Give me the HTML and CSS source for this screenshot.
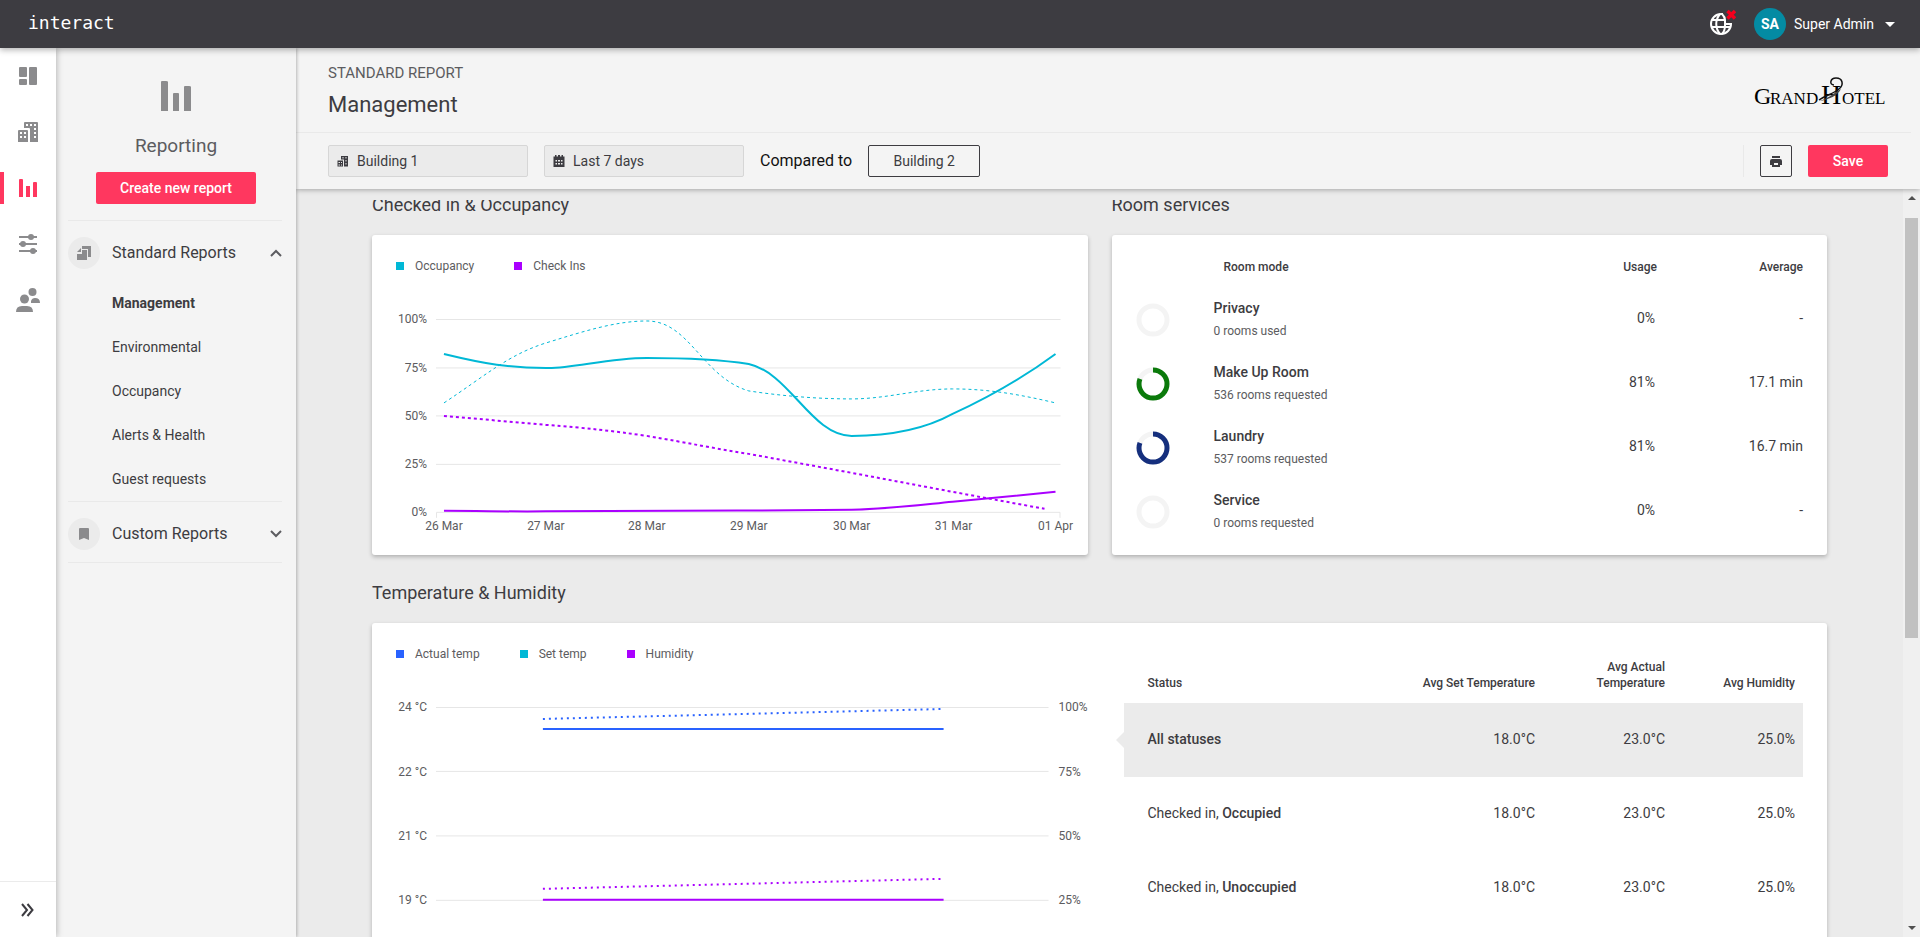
FILE: index.html
```html
<!DOCTYPE html>
<html lang="en">
<head>
  <meta charset="UTF-8">
  <title>Interact - Management report</title>
  <meta name="viewport" content="width=device-width, initial-scale=1">
  <link rel="stylesheet" href="styles.css">
</head>
<body>

<header class="topbar">
  <a class="brand" href="#">interact</a>
  <div class="topbar-right">
    <button class="icon-button globe" aria-label="Connection status">
      <svg width="28" height="28" viewBox="0 0 28 28">
        <g fill="none" stroke="#fff" stroke-width="2">
          <path d="M15 5h-2a10 10 0 1 0 10 10h-6"/>
          <path d="M12 5c-5 6-5 14 0 20M14 5c2 2 3 4 3 6v5c0 4-1 7-3 9M4 11h13M4 18h18"/>
        </g>
        <path d="M19.500 2l7.500 7.500M27 2l-7.500 7.500" stroke="#f5001d" stroke-width="3.500"/>
      </svg>
    </button>
    <button class="user">
      <span class="avatar">SA</span>
      <span>Super Admin</span>
      <svg width="10" height="5" viewBox="0 0 10 5"><path d="M0 0h10L5 5z" fill="#fff"/></svg>
    </button>
  </div>
</header>

<div class="shell">
  <nav class="rail" aria-label="Main">
    <a href="#" class="rail-item" aria-label="Dashboard">
      <svg width="24" height="24" viewBox="0 0 24 24" fill="currentColor"><rect x="3" y="3" width="8" height="10" rx="1"/><rect x="3" y="15" width="8" height="6" rx="1"/><rect x="13" y="3" width="8" height="18" rx="1"/></svg>
    </a>
    <a href="#" class="rail-item" aria-label="Buildings">
      <svg width="24" height="24" viewBox="0 0 24 24" fill="currentColor" fill-rule="evenodd"><path d="M9 2h12q1 0 1 1v19h-8V9q0-1-1-1H8V3q0-1 1-1zM10 4v2h2V4zm4 0v2h2V4zm4 0v2h2V4zm0 4v2h2V8zm0 4v2h2v-2zm0 4v2h2v-2zM3 10h8q1 0 1 1v11H2V11q0-1 1-1zm1 2v2h2v-2zm4 0v2h2v-2zm-4 4v2h2v-2zm4 0v2h2v-2z"/></svg>
    </a>
    <a href="#" class="rail-item active" aria-label="Reporting">
      <svg width="24" height="24" viewBox="0 0 24 24" fill="currentColor"><path d="M3 21V4q0-1 1-1h2q1 0 1 1v17zM10 21V10h4v11zM17 21V7q0-1 1-1h2q1 0 1 1v14z"/></svg>
    </a>
    <a href="#" class="rail-item" aria-label="Settings">
      <svg width="24" height="24" viewBox="0 0 24 24" fill="currentColor"><path d="M3 4h18v2H3zM3 11h18v2H3zM3 18h18v2H3z"/><circle cx="15" cy="5" r="3"/><circle cx="7" cy="12" r="3"/><circle cx="17" cy="19" r="3"/></svg>
    </a>
    <a href="#" class="rail-item" aria-label="Users">
      <svg width="24" height="24" viewBox="0 0 24 24" fill="currentColor"><circle cx="16.500" cy="4" r="4"/><circle cx="8.500" cy="11" r="4.500"/><path d="M0 24q0-6 6-6h5q6 0 6 6zM15 15V13q1-3 4-3 5 0 5 5z"/></svg>
    </a>
    <button class="rail-expand" aria-label="Expand menu">
      <svg width="14" height="14" viewBox="0 0 14 14" fill="none" stroke="#3d3c41" stroke-width="2"><path d="M1 1l5 6-5 6M6.500 1l5 6-5 6"/></svg>
    </button>
  </nav>

  <aside class="sidebar">
    <div class="sidebar-head">
      <svg width="32" height="32" viewBox="0 0 32 32" fill="#8b8b8d"><path d="M1 31V2q0-1 1-1h4q2 0 2 1v29zM13 31V14q0-1 1-1h4q1 0 1 1v17zM24 31V7q0-1 1-1h4q2 0 2 1v24z"/></svg>
      <h2>Reporting</h2>
      <button class="btn-primary create">Create new report</button>
    </div>
    <div class="menu-group">
      <button class="menu-toggle" aria-expanded="true">
        <span class="menu-icon">
          <svg width="16" height="16" viewBox="0 0 16 16" fill="#8b8b8d"><path d="M6 1h9v11h-3V4H6zM6 5h5v10H1V9h5zM1 7l4-4v4z"/></svg>
        </span>
        <span class="menu-label">Standard Reports</span>
        <svg width="12" height="8" viewBox="0 0 12 8" fill="none" stroke="#5c5c60" stroke-width="2"><path d="M1 7l5-5 5 5"/></svg>
      </button>
      <ul class="menu-list">
        <li><a class="selected" href="#">Management</a></li>
        <li><a href="#">Environmental</a></li>
        <li><a href="#">Occupancy</a></li>
        <li><a href="#">Alerts &amp; Health</a></li>
        <li><a href="#">Guest requests</a></li>
      </ul>
    </div>
    <div class="menu-group last">
      <button class="menu-toggle" aria-expanded="false">
        <span class="menu-icon">
          <svg width="16" height="16" viewBox="0 0 16 16" fill="#8b8b8d"><path d="M3 14V3q0-1 1-1h8q1 0 1 1v11l-5-2z"/></svg>
        </span>
        <span class="menu-label">Custom Reports</span>
        <svg width="12" height="8" viewBox="0 0 12 8" fill="none" stroke="#5c5c60" stroke-width="2"><path d="M1 1l5 5 5-5"/></svg>
      </button>
    </div>
  </aside>

  <main class="main">
    <div class="page-head">
      <div class="page-title">
        <div>
          <p class="eyebrow">STANDARD REPORT</p>
          <h1>Management</h1>
        </div>
        <svg class="hotel-logo" width="134" height="30" viewBox="0 0 134 30" role="img" aria-label="Grand Hotel">
          <text y="28"><tspan x="0" class="cap">G</tspan><tspan x="16">RAND</tspan><tspan x="67" class="big">H</tspan><tspan x="88">OTEL</tspan></text>
          <path d="M80 9c-5 0-4-7 2-7 7 0 8 7 3 11-6 5-13 6-20 11" fill="none" stroke="#111" stroke-width="1.500"/>
          <path d="M65 25c7-1 15-8 22-12-3 6-12 11-22 12z" fill="#444"/>
        </svg>
      </div>
      <div class="filters">
        <button class="field">
          <svg width="12" height="12" viewBox="0 0 24 24" fill="#3d3c41" fill-rule="evenodd"><path d="M8 2h14v21h-8V9H8zM11 4v3h2V4zm6 0v3h2V4zm0 6v3h2v-3zm0 6v3h2v-3zM1 11h11v12H1zm2 3v2h3v-2zm5 0v2h2v-2zm-5 5v2h3v-2zm5 0v2h2v-2z"/></svg>
          Building 1
        </button>
        <button class="field">
          <svg width="12" height="12" viewBox="0 0 24 24" fill="#3d3c41" fill-rule="evenodd"><path d="M1 3h3V0h3v3h3V0h4v3h3V0h3v3h3v21H1zM5 10v3h3v-3zm5 0v3h4v-3zm6 0v3h3v-3zM5 16v3h3v-3zm5 0v3h4v-3zm6 0v3h3v-3z"/></svg>
          Last 7 days
        </button>
        <span class="compared">Compared to</span>
        <button class="btn-outline">Building 2</button>
        <div class="actions">
          <button class="btn-outline print" aria-label="Print">
            <svg width="12" height="12" viewBox="0 0 12 12" fill="#3d3c41"><path d="M2 1h8v2H2zM2 4h8q2 0 2 2v4H0V6q0-2 2-2zM2 8h8v4H2z"/><path d="M4 8h4v2H4z" fill="#f4f4f4"/></svg>
          </button>
          <button class="btn-primary save">Save</button>
        </div>
      </div>
    </div>

    <div class="scroll-area">
      <div class="viewport">
        <div class="content">
          <section>
            <h3>Checked in &amp; Occupancy</h3>
            <div class="card">
              <ul class="legend">
                <li class="cyan">Occupancy</li>
                <li class="purple">Check Ins</li>
              </ul>
              <svg class="chart" viewBox="0 0 716 270">
                <path class="grid" d="M64 34.500h625M64 83h625M64 131h625M64 179.500h625M64.500 233v-5.500h624v5.500"/>
                <g class="axis-left">
                  <text x="55" y="38">100%</text>
                  <text x="55" y="87">75%</text>
                  <text x="55" y="135">50%</text>
                  <text x="55" y="183">25%</text>
                  <text x="55" y="231">0%</text>
                </g>
                <g class="axis-bottom">
                  <text x="72" y="245">26 Mar</text>
                  <text x="174" y="245">27 Mar</text>
                  <text x="275" y="245">28 Mar</text>
                  <text x="377" y="245">29 Mar</text>
                  <text x="480" y="245">30 Mar</text>
                  <text x="582" y="245">31 Mar</text>
                  <text x="684" y="245">01 Apr</text>
                </g>
                <path class="line cyan thin" d="M72 118C113 91 136 70 174 58C210 47 243 36 275 36C318 36 330 92 377 106C410 111 445 114 480 114C515 114 545 104 581 104C618 104 650 110 684 118"/>
                <path class="line purple dashed" d="M72 131L174 140C215 143 240 146 275 151C316 158 345 164 377 169L480 188L581 207L673 224"/>
                <path class="line cyan" d="M72 69C113 79 138 83 174 83C200 84 235 73 275 73C316 73 345 74 377 79C418 88 440 151 480 151C515 151 550 146 581 129C618 112 650 94 684 69"/>
                <path class="line purple" d="M72 226C113 226 138 227 174 226.500C240 226 380 226 480 225C520 224 550 220 581 217L684 207"/>
              </svg>
            </div>
          </section>

          <section>
            <h3>Room services</h3>
            <div class="card services">
              <table>
                <thead>
                  <tr><th class="ring-col"></th><th class="mode">Room mode</th><th class="usage">Usage</th><th class="average">Average</th></tr>
                </thead>
                <tbody>
                  <tr>
                    <td><svg class="ring" viewBox="0 0 34 34"><circle cx="17" cy="17" r="14"/></svg></td>
                    <td class="name"><strong>Privacy</strong><small>0 rooms used</small></td>
                    <td class="usage">0%</td><td class="average">-</td>
                  </tr>
                  <tr>
                    <td><svg class="ring" viewBox="0 0 34 34"><circle cx="17" cy="17" r="14"/><circle class="green" cx="17" cy="17" r="14" pathLength="100"/></svg></td>
                    <td class="name"><strong>Make Up Room</strong><small>536 rooms requested</small></td>
                    <td class="usage">81%</td><td class="average">17.1 min</td>
                  </tr>
                  <tr>
                    <td><svg class="ring" viewBox="0 0 34 34"><circle cx="17" cy="17" r="14"/><circle class="navy" cx="17" cy="17" r="14" pathLength="100"/></svg></td>
                    <td class="name"><strong>Laundry</strong><small>537 rooms requested</small></td>
                    <td class="usage">81%</td><td class="average">16.7 min</td>
                  </tr>
                  <tr>
                    <td><svg class="ring" viewBox="0 0 34 34"><circle cx="17" cy="17" r="14"/></svg></td>
                    <td class="name"><strong>Service</strong><small>0 rooms requested</small></td>
                    <td class="usage">0%</td><td class="average">-</td>
                  </tr>
                </tbody>
              </table>
            </div>
          </section>

          <section class="wide">
            <h3>Temperature &amp; Humidity</h3>
            <div class="card climate">
              <div>
                <ul class="legend">
                  <li class="blue">Actual temp</li>
                  <li class="cyan">Set temp</li>
                  <li class="purple">Humidity</li>
                </ul>
                <svg class="chart" viewBox="0 0 716 270">
                  <path class="grid" d="M64 34.500h613M64 98.500h613M64 163h613M64 227.500h613"/>
                  <g class="axis-left">
                    <text x="55" y="38">24 °C</text>
                    <text x="55" y="103">22 °C</text>
                    <text x="55" y="167">21 °C</text>
                    <text x="55" y="231">19 °C</text>
                  </g>
                  <g class="axis-right">
                    <text x="687" y="38">100%</text>
                    <text x="687" y="103">75%</text>
                    <text x="687" y="167">50%</text>
                    <text x="687" y="231">25%</text>
                  </g>
                  <path class="line blue" d="M171 56H572"/>
                  <path class="line blue dotted" d="M171 46L572 36"/>
                  <path class="line purple" d="M171 227H572"/>
                  <path class="line purple dotted" d="M171 216L572 206"/>
                </svg>
              </div>
              <div class="status">
                <table>
                  <thead>
                    <tr><th>Status</th><th>Avg Set Temperature</th><th class="narrow">Avg Actual Temperature</th><th class="narrow">Avg Humidity</th></tr>
                  </thead>
                  <tbody>
                    <tr class="current"><td><strong>All statuses</strong></td><td>18.0°C</td><td>23.0°C</td><td>25.0%</td></tr>
                    <tr><td>Checked in, <strong>Occupied</strong></td><td>18.0°C</td><td>23.0°C</td><td>25.0%</td></tr>
                    <tr><td>Checked in, <strong>Unoccupied</strong></td><td>18.0°C</td><td>23.0°C</td><td>25.0%</td></tr>
                  </tbody>
                </table>
              </div>
            </div>
          </section>
        </div>
      </div>
      <div class="scrollbar" aria-hidden="true">
        <svg width="8" height="4" viewBox="0 0 8 4"><path d="M0 4l4-4 4 4z" fill="#505050"/></svg>
        <div class="track"><div class="thumb"></div></div>
        <svg width="8" height="4" viewBox="0 0 8 4"><path d="M0 0l4 4 4-4z" fill="#505050"/></svg>
      </div>
    </div>
  </main>
</div>

</body>
</html>
```
FILE: styles.css
```css
* {
  box-sizing: border-box;
}
body {
  margin: 0;
  height: 100vh;
  display: flex;
  flex-direction: column;
  overflow: hidden;
  font-family: Roboto, "Liberation Sans", sans-serif;
  font-size: 14px;
  line-height: 20px;
  color: #3d3c41;
  background: #ebebeb;
}
h1, h2, h3, p, ul {
  margin: 0;
  padding: 0;
  font-weight: 400;
}
ul {
  list-style: none;
}
a {
  color: inherit;
  text-decoration: none;
}
button {
  font: inherit;
  color: inherit;
  background: none;
  border: 0;
  padding: 0;
  cursor: pointer;
}
svg {
  display: block;
  flex-shrink: 0;
}
table {
  width: 100%;
  border-collapse: collapse;
}
th {
  font-size: 12px;
  line-height: 16px;
  font-weight: 500;
}
td, th {
  padding: 0;
}
strong {
  font-weight: 500;
}

/* top bar */
.topbar {
  height: 48px;
  flex-shrink: 0;
  display: flex;
  align-items: center;
  justify-content: space-between;
  padding: 0 25px 0 28px;
  background: #3d3c41;
  color: #fff;
  position: relative;
  z-index: 3;
  box-shadow: 0 2px 6px rgba(0,0,0,0.3);
}
.brand {
  padding-bottom: 2px;
  font-family: "DejaVu Sans Mono", monospace;
  font-size: 18px;
}
.topbar-right {
  display: flex;
  align-items: center;
  gap: 18px;
}
.globe {
  padding-bottom: 2px;
}
.user {
  display: flex;
  align-items: center;
}
.avatar {
  width: 32px;
  height: 32px;
  line-height: 32px;
  margin-right: 8px;
  border-radius: 50%;
  background: #048ba3;
  font-weight: 700;
}
.user svg {
  margin-left: 11px;
}

/* left icon rail */
.shell {
  flex: 1;
  min-height: 0;
  display: flex;
}
.rail {
  width: 56px;
  flex-shrink: 0;
  display: flex;
  flex-direction: column;
  background: #fff;
  color: #8b8b8d;
  position: relative;
  z-index: 2;
  box-shadow: 1px 0 6px rgba(0,0,0,0.25);
}
.rail-item {
  height: 56px;
  display: flex;
  align-items: center;
  justify-content: center;
}
.rail-item.active {
  color: #ff375f;
  background: linear-gradient(#ff375f, #ff375f) left center / 4px 32px no-repeat;
}
.rail-expand {
  height: 56px;
  margin-top: auto;
  display: flex;
  align-items: center;
  justify-content: center;
  border-top: 1px solid #ebebeb;
}

/* section menu */
.sidebar {
  width: 240px;
  flex-shrink: 0;
  padding: 0 14px 0 12px;
  background: #f4f4f4;
  position: relative;
  z-index: 1;
  box-shadow: 1px 0 3px rgba(0,0,0,0.25);
}
.sidebar-head {
  display: flex;
  flex-direction: column;
  align-items: center;
  padding: 32px 0 16px 2px;
}
.sidebar-head h2 {
  margin: 22px 0 14px;
  font-size: 19px;
  line-height: 24px;
  color: #5c5c60;
}
.btn-primary {
  height: 32px;
  border-radius: 2px;
  background: #ff375f;
  color: #fff;
  font-weight: 500;
}
.create {
  width: 160px;
}
.menu-group {
  border-top: 1px solid #e9e9e9;
}
.menu-group.last {
  border-bottom: 1px solid #e9e9e9;
}
.menu-toggle {
  width: 100%;
  height: 56px;
  display: flex;
  align-items: center;
  gap: 12px;
  margin-top: 4px;
  font-size: 16px;
  text-align: left;
}
.menu-icon {
  width: 32px;
  height: 32px;
  display: flex;
  align-items: center;
  justify-content: center;
  border-radius: 50%;
  background: #ebebeb;
}
.menu-label {
  flex: 1;
}
.menu-list a {
  display: block;
  padding-left: 44px;
  line-height: 44px;
}
.menu-list .selected {
  font-weight: 700;
}

/* page header */
.main {
  flex: 1;
  min-width: 0;
  display: flex;
  flex-direction: column;
}
.page-head {
  background: #f4f4f4;
  position: relative;
  box-shadow: 0 1px 5px rgba(0,0,0,0.3);
}
.page-title {
  display: flex;
  justify-content: space-between;
  align-items: center;
  height: 85px;
  margin-right: 9px;
  padding: 2px 23px 0 32px;
  border-bottom: 1px solid #e9e9e9;
}
.eyebrow {
  margin-bottom: 8px;
  font-size: 15px;
  color: #5c5c60;
}
.page-title h1 {
  font-size: 22px;
  line-height: 28px;
}
.hotel-logo {
  overflow: visible;
  font-family: "Liberation Serif", serif;
  font-size: 17px;
}
.hotel-logo .cap {
  font-size: 24px;
}
.hotel-logo .big {
  font-size: 28px;
}
.filters {
  display: flex;
  align-items: center;
  gap: 16px;
  padding: 12px 32px;
}
.field {
  width: 200px;
  height: 32px;
  display: flex;
  align-items: center;
  gap: 8px;
  padding: 0 8px;
  border: 1px solid #d6d6d6;
  border-radius: 2px;
  background: #ebebeb;
}
.compared {
  font-size: 16px;
  color: #111;
}
.btn-outline {
  width: 112px;
  height: 32px;
  border: 1px solid #3d3c41;
  border-radius: 2px;
}
.actions {
  display: flex;
  gap: 16px;
  margin-left: auto;
  padding-left: 16px;
  border-left: 1px solid #e9e9e9;
}
.print {
  width: 32px;
  display: flex;
  align-items: center;
  justify-content: center;
}
.save {
  width: 80px;
}

/* report content */
.scroll-area {
  flex: 1;
  min-height: 0;
  display: flex;
}
.viewport {
  flex: 1;
  min-width: 0;
  margin-top: 11px;
  overflow: hidden;
}
/* starts slightly scrolled */
.content {
  display: grid;
  grid-template-columns: 1fr 1fr;
  column-gap: 24px;
  row-gap: 27px;
  margin-top: -6px;
  padding: 0 76px;
}
.wide {
  grid-column: 1 / -1;
}
section {
  display: flex;
  flex-direction: column;
  min-width: 0;
}
h3 {
  margin-bottom: 19px;
  font-size: 18px;
  line-height: 22px;
}
.card {
  flex: 1;
  background: #fff;
  border-radius: 3px;
  box-shadow: 0 2px 4px rgba(0,0,0,0.25);
}
.legend {
  display: flex;
  gap: 40px;
  padding: 23px 24px 11px;
  font-size: 12px;
  line-height: 16px;
  color: #5c5c60;
}
.legend li {
  display: flex;
  align-items: center;
  gap: 11px;
}
.legend li::before {
  content: "";
  width: 8px;
  height: 8px;
  background: #00b8d6;
}
.legend .purple::before {
  background: #aa00ff;
}
.legend .blue::before {
  background: #2962ff;
}
.chart {
  width: 100%;
  font-size: 12px;
  fill: #5c5c60;
}
.axis-left {
  text-anchor: end;
}
.axis-bottom {
  text-anchor: middle;
}
.grid {
  fill: none;
  stroke: #e6e6e6;
}
.line {
  fill: none;
  stroke-width: 2;
}
.line.cyan {
  stroke: #00b8d6;
}
.line.purple {
  stroke: #aa00ff;
}
.line.blue {
  stroke: #2962ff;
}
.line.thin {
  stroke-width: 1;
  stroke-dasharray: 3 3;
}
.line.dashed {
  stroke-dasharray: 3 3;
}
.line.dotted {
  stroke-dasharray: 2 4;
}

/* room services */
.services {
  padding: 9px 24px 11px;
}
.services th {
  height: 44px;
  padding-top: 2px;
}
.services td {
  height: 64px;
}
.ring-col {
  width: 78px;
}
.services .mode {
  padding-left: 10px;
  text-align: left;
}
.services .name {
  padding-bottom: 2px;
}
.services .usage {
  width: 130px;
  text-align: right;
}
.services .average {
  width: 146px;
  text-align: right;
}
.services td.usage {
  padding: 0 2px 4px 0;
}
.services td.average {
  padding-bottom: 4px;
}
.services strong, .services small {
  display: block;
}
.services small {
  margin-top: 4px;
  font-size: 12px;
  line-height: 18px;
  color: #5c5c60;
}
.ring {
  width: 34px;
  height: 34px;
  transform: rotate(-90deg);
  fill: none;
  stroke: #f4f4f4;
  stroke-width: 5;
}
.ring .green, .ring .navy {
  stroke-dasharray: 81 19;
}
.ring .green {
  stroke: #0b7a0b;
}
.ring .navy {
  stroke: #152f7d;
}

/* temperature and humidity */
.climate {
  display: grid;
  grid-template-columns: 1fr 1fr;
  column-gap: 24px;
}
.status {
  padding: 0 24px 0 12px;
}
.status th {
  height: 80px;
  padding: 0 8px 12px;
  vertical-align: bottom;
}
.status td {
  height: 74px;
  padding: 0 8px 2px;
}
.status th, .status td {
  text-align: right;
}
.status th:first-child, .status td:first-child {
  padding-left: 24px;
  text-align: left;
}
.narrow {
  width: 130px;
}
.current {
  background: #ebebeb;
}
.current td:first-child {
  position: relative;
}
.current td:first-child::before {
  content: "";
  position: absolute;
  left: -8px;
  top: 29px;
  border: 8px solid transparent;
  border-left: 0;
  border-right-color: #ebebeb;
}

/* scrollbar */
.scrollbar {
  width: 17px;
  display: flex;
  flex-direction: column;
  align-items: center;
  padding: 7px 0;
  background: #f0f0f0;
}
.track {
  flex: 1;
  padding: 18px 0 8px;
}
.thumb {
  width: 13px;
  height: 60%;
  background: #c1c1c1;
}
```
